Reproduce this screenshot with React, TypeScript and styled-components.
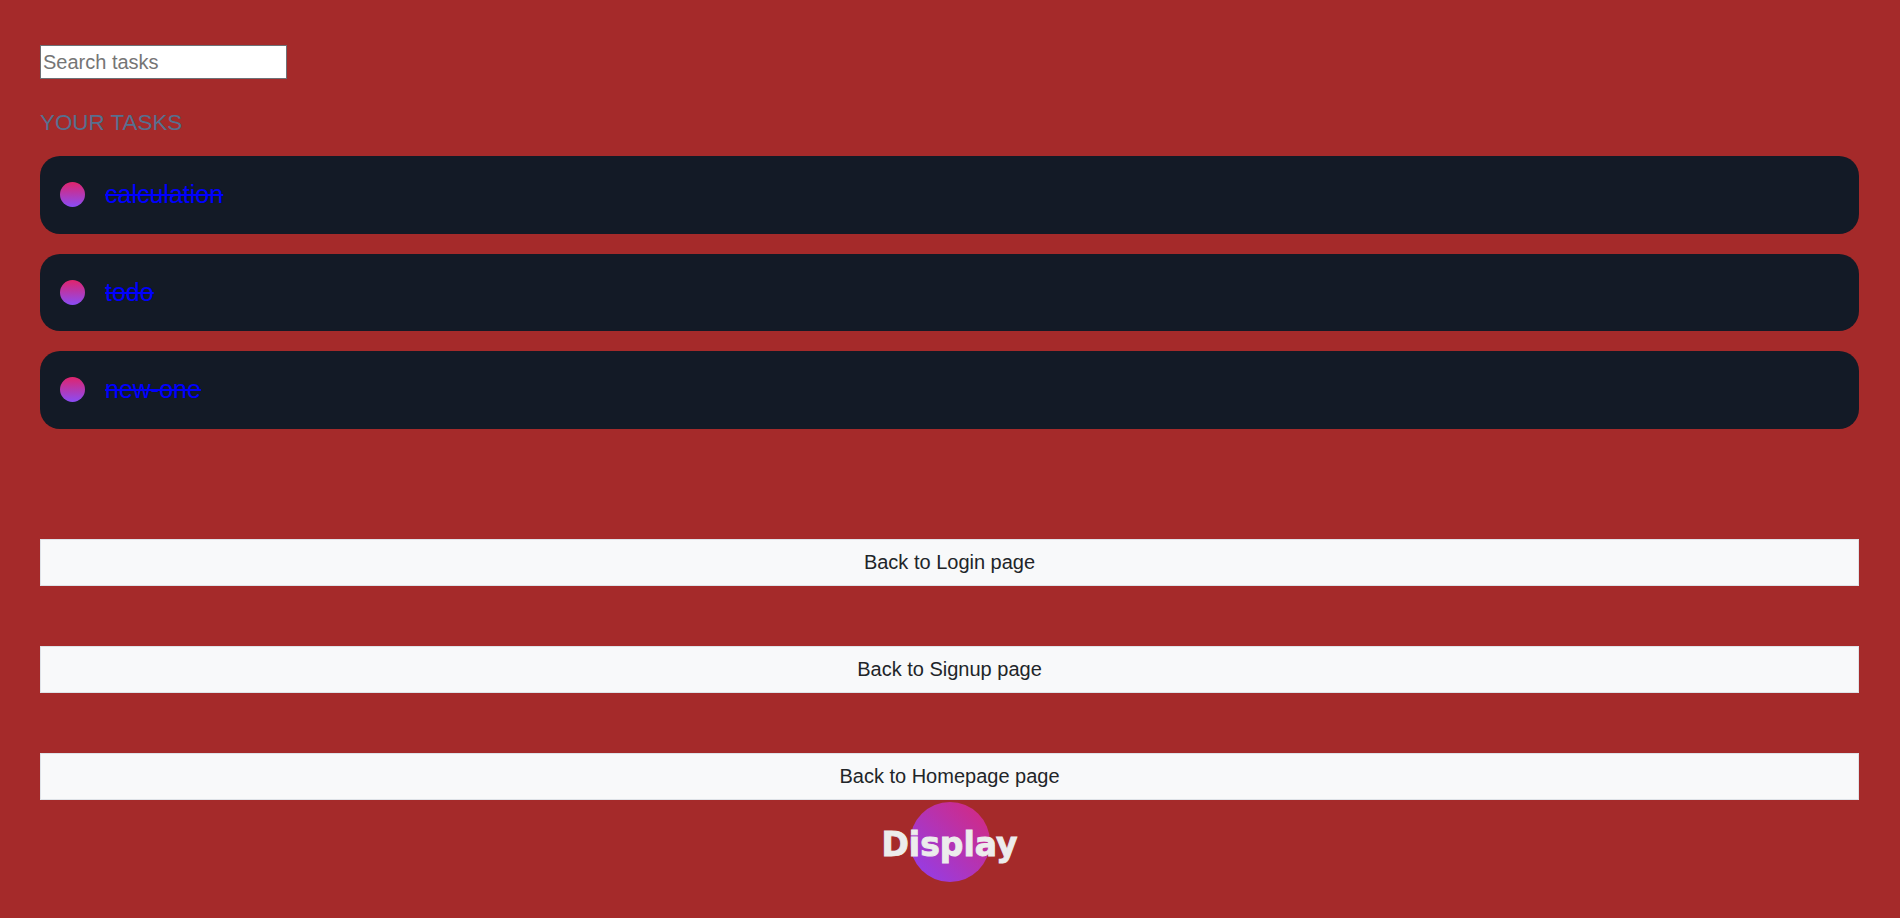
import React from "react";
import styled, { createGlobalStyle } from "styled-components";

const GlobalStyle = createGlobalStyle`
  html, body {
    margin: 0;
    padding: 0;
    background: #a52a2a;
  }
  body {
    font-family: "Liberation Sans", Arial, sans-serif;
  }
  * { box-sizing: border-box; }
`;

const Page = styled.div`
  min-height: 918px;
  padding: 45px 41px 0 40px;
  display: flex;
  flex-direction: column;
  background: #a52a2a;
`;

const SearchInput = styled.input`
  width: 247px;
  height: 34px;
  padding: 0 2px;
  border: 1px solid #6e7176;
  background: #ffffff;
  font-family: "Liberation Sans", Arial, sans-serif;
  font-size: 20px;
  color: #222;
  outline: none;
  &::placeholder {
    color: #757575;
  }
`;

const Heading = styled.h2`
  margin: 31px 0 0 0;
  font-family: "Liberation Sans", Arial, sans-serif;
  font-weight: 400;
  font-size: 22.4px;
  line-height: 25px;
  color: #56708f;
`;

const TaskList = styled.ul`
  list-style: none;
  margin: 21px 0 0 0;
  padding: 0;
  display: flex;
  flex-direction: column;
  gap: 20px;
`;

const TaskCard = styled.li`
  height: 77.5px;
  background: #131a26;
  border-radius: 20px;
  display: flex;
  align-items: center;
  gap: 20px;
  padding: 0 20px;
`;

const Dot = styled.span`
  width: 25px;
  height: 25px;
  border-radius: 50%;
  flex: none;
  background: linear-gradient(to bottom, #e0246c, #8a4cf6);
`;

const TaskTitle = styled.a<{ $done?: boolean }>`
  font-family: "Liberation Sans", Arial, sans-serif;
  font-size: 25px;
  color: #0000ff;
  text-decoration: ${(p) => (p.$done ? "line-through" : "none")};
  cursor: pointer;
`;

const NavGroup = styled.div`
  margin-top: 110.5px;
  display: flex;
  flex-direction: column;
  gap: 60.5px;
`;

const NavButton = styled.button`
  width: 100%;
  height: 46.5px;
  background: #f8f9fa;
  border: 1px solid #dfe3e8;
  border-radius: 0;
  font-family: "Liberation Sans", Arial, sans-serif;
  font-size: 20px;
  color: #212529;
  cursor: pointer;
  padding: 0;
`;

const DisplayBadge = styled.div`
  margin-top: 2px;
  display: grid;
  place-items: center;
  > * {
    grid-area: 1 / 1;
  }
`;

const DisplayCircle = styled.div`
  width: 80px;
  height: 80px;
  border-radius: 50%;
  background: linear-gradient(to top right, #8e3ff0, #d8287a);
`;

const DisplayText = styled.span`
  font-family: "DejaVu Sans", "Liberation Sans", sans-serif;
  font-weight: 700;
  font-size: 33px;
  color: #ececec;
  line-height: 1;
  margin-top: 6px;
  -webkit-text-stroke: 0.9px #ececec;
`;

const tasks = ["calculation", "todo", "new-one"];
const navs = ["Back to Login page", "Back to Signup page", "Back to Homepage page"];

export default function App() {
  return (
    <>
      <GlobalStyle />
      <Page>
        <div>
          <SearchInput placeholder="Search tasks" />
        </div>
        <Heading>YOUR TASKS</Heading>
        <TaskList>
          {tasks.map((t) => (
            <TaskCard key={t}>
              <Dot />
              <TaskTitle $done>{t}</TaskTitle>
            </TaskCard>
          ))}
        </TaskList>
        <NavGroup>
          {navs.map((n) => (
            <NavButton key={n}>{n}</NavButton>
          ))}
        </NavGroup>
        <DisplayBadge>
          <DisplayCircle />
          <DisplayText>Display</DisplayText>
        </DisplayBadge>
      </Page>
    </>
  );
}
